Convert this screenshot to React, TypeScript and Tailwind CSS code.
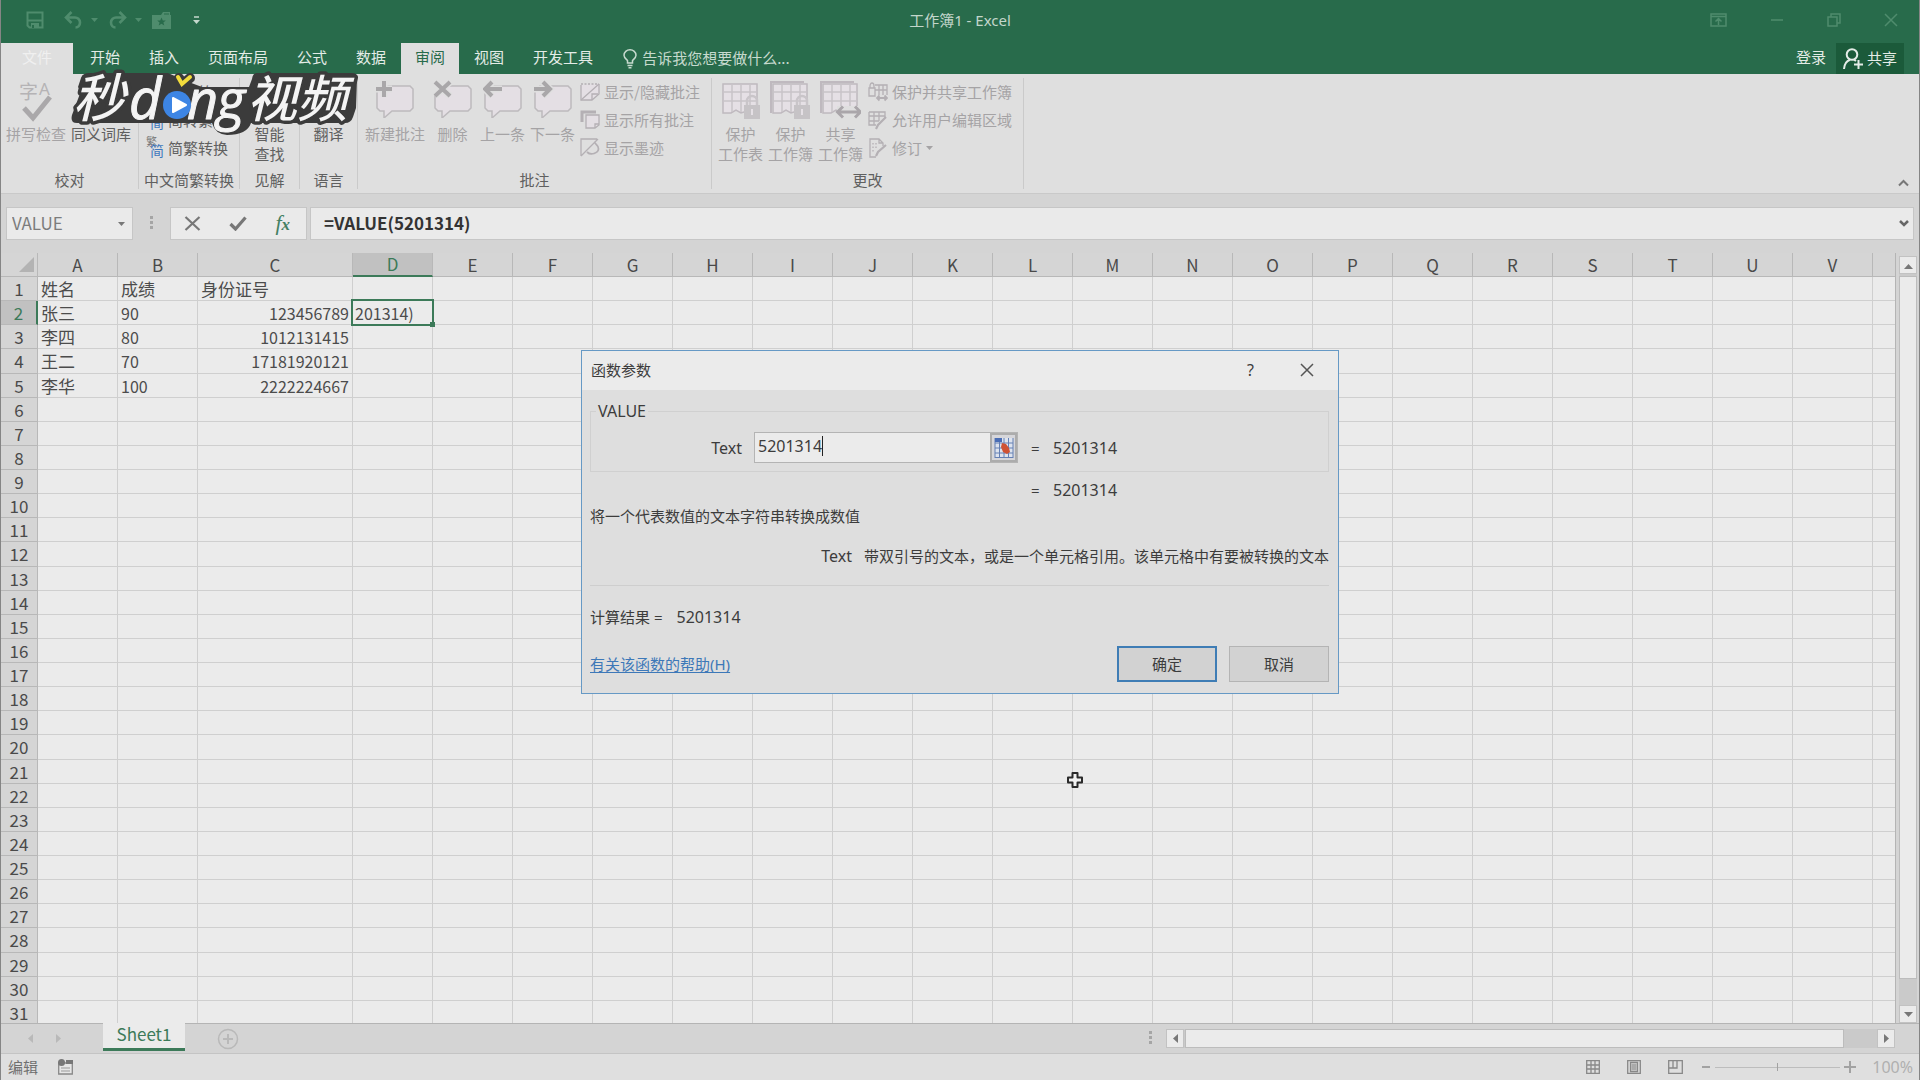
import clsx from "clsx";
import type { ReactNode } from "react";

const COLUMNS = "ABCDEFGHIJKLMNOPQRSTUV".split("");
const ROWS = Array.from({ length: 31 }, (_, i) => i + 1);

const CELLS: Record<string, string> = {
  A1: "姓名",
  B1: "成绩",
  C1: "身份证号",
  A2: "张三",
  B2: "90",
  C2: "123456789",
  D2: "201314)",
  A3: "李四",
  B3: "80",
  C3: "1012131415",
  A4: "王二",
  B4: "70",
  C4: "17181920121",
  A5: "李华",
  B5: "100",
  C5: "2222224667",
};

const TABS = [
  "开始",
  "插入",
  "页面布局",
  "公式",
  "数据",
  "审阅",
  "视图",
  "开发工具",
];

/* ---------- icons ---------- */

function SaveIcon() {
  return (
    <svg width="18" height="18" viewBox="0 0 18 18" fill="none" stroke="currentColor" strokeWidth="2">
      <path d="M1.5 1.5h15v15H3.500l-2-2z" />
      <path d="M2 9.500h14" />
      <path d="M5 12h8v5H5z" fill="currentColor" stroke="none" />
      <path d="M7 14v3" stroke="#286b4b" />
    </svg>
  );
}

function UndoIcon({ flip }: { flip?: boolean }) {
  return (
    <svg
      width="19"
      height="18"
      viewBox="0 0 19 18"
      fill="none"
      stroke="currentColor"
      strokeWidth="2.600"
      className={clsx(flip && "-scale-x-100")}
    >
      <path d="M7.500 1 2 6.500l5.500 5.500M2.500 6.500h8a5 5 0 0 1 5.500 5c0 3-2 5-4.500 5" />
    </svg>
  );
}

function CaretIcon({ className }: { className?: string }) {
  return (
    <svg width="7" height="4" viewBox="0 0 7 4" className={className}>
      <path d="M0 0h7L3.500 4z" fill="currentColor" />
    </svg>
  );
}

function FolderStarIcon() {
  return (
    <svg width="19" height="17" viewBox="0 0 19 17">
      <path d="M0 3h9l2-3h7v3h1v14H0z" fill="currentColor" />
      <path d="M12 2h5" stroke="#286b4b" />
      <path d="m9.500 5.500 1.300 3h3l-2.400 2 .9 3-2.800-1.800-2.800 1.800.9-3-2.400-2h3z" fill="#286b4b" />
    </svg>
  );
}

function BulbIcon() {
  return (
    <svg width="14" height="20" viewBox="0 0 14 20" fill="none" stroke="currentColor" strokeWidth="1.500">
      <path d="M4.500 14v-2.500C3 10 1 8.800 1 6.300a6 5.500 0 0 1 12 0c0 2.500-2 3.700-3.500 5.200V14z" />
      <path d="M4.500 16.500h5M5.500 18.800h3" />
    </svg>
  );
}

function PersonIcon() {
  return (
    <svg width="20" height="22" viewBox="0 0 20 22" fill="none" stroke="currentColor" strokeWidth="2">
      <circle cx="9" cy="6.500" r="5.300" />
      <path d="M1 21c.3-5 2.500-8 6-9.300M11 11.700l2 1.300M15.500 12v9M11 16.500h9" />
    </svg>
  );
}

function SpellIcon() {
  return (
    <svg width="38" height="42" viewBox="0 0 38 42" fill="#b5b3b5" className="overflow-visible">
      <text x="2" y="19" fontSize="19" className="font-[Noto_Sans_CJK_SC,sans-serif]">字</text>
      <text x="22" y="15" fontSize="17" className="font-[Noto_Sans,sans-serif]">A</text>
      <path d="m7 28 9 10L33 17" fill="none" stroke="#aaa8aa" strokeWidth="5" />
    </svg>
  );
}

function ConvertIcon() {
  return (
    <svg width="18" height="24" viewBox="0 0 18 24" className="overflow-visible font-[Noto_Sans_CJK_SC,sans-serif]">
      <text x="0" y="10" fontSize="11" fill="#777">繁</text>
      <text x="4" y="20" fontSize="14" fill="#3f78bd">简</text>
    </svg>
  );
}

type CommentKind = "new" | "delete" | "previous" | "next";

const COMMENT_MARKS: Record<CommentKind, string> = {
  new: "M9 1v16M1 9h16",
  delete: "M2 2l15 14M17 2 2 16",
  previous: "M19 9H3M9 2 2 9l7 7",
  next: "M1 9h16M10 2l7 7-7 7",
};

function CommentIcon({ kind }: { kind: CommentKind }) {
  return (
    <svg width="40" height="38" viewBox="0 0 40 38" fill="none">
      <path
        d="M6 6h29l3 3v19l-3 3H17l-8 7v-7H5l-3-3V12"
        fill="#e4dfe4"
        stroke="#bdbabd"
        strokeWidth="1.500"
      />
      <path d={COMMENT_MARKS[kind]} stroke="#dfdfdf" strokeWidth="7" />
      <path d={COMMENT_MARKS[kind]} stroke="#a9a7a9" strokeWidth="4" />
    </svg>
  );
}

function SheetIcon({ mark, stacked }: { mark: "lock" | "arrow"; stacked?: boolean }) {
  return (
    <svg width="42" height="40" viewBox="0 0 42 40" fill="none" stroke="#bfb9bf" strokeWidth="1.500">
      {stacked && <path d="M2 33V2h33" strokeWidth="2" />}
      <path d="M4 4h34v26l-5 3-5-2-6 2-5-3-5 3H4z" fill="#e5e0e5" />
      <path d="M13 4v28M22 4v28M31 4v28M4 12h34M4 21h34" stroke="#c8c3c8" />
      {mark === "lock" ? (
        <>
          <path d="M28 25v-4a5 5 0 0 1 10 0v4" stroke="#c9c5c9" strokeWidth="2.500" />
          <path d="M25 25h16v14H25z" fill="#c6c3c6" stroke="none" />
          <path d="M33 29v6" stroke="#e5e0e5" strokeWidth="2" />
        </>
      ) : (
        <>
          <path d="M18 26h24v12H18z" fill="#dfdfdf" stroke="none" />
          <path d="M19 32h22M24 26.500 18.500 32l5.500 5.500M36 26.500l5.500 5.500-5.500 5.500" stroke="#aaa6aa" strokeWidth="3" />
        </>
      )}
    </svg>
  );
}

function SmallIcon({ children }: { children: ReactNode }) {
  return (
    <svg width="20" height="20" viewBox="0 0 20 20" fill="none" stroke="#b4b0b4" strokeWidth="1.300" className="shrink-0">
      {children}
    </svg>
  );
}

const toggleNoteIcon = (
  <SmallIcon>
    <path d="M1 3v15h11l7-6V2" fill="#e4dfe4" />
    <path d="M1 2h18" strokeDasharray="2 1.500" />
    <path d="M1 18 19 2M12 18v-6h6" />
  </SmallIcon>
);

const allNotesIcon = (
  <SmallIcon>
    <path d="M2 12V2h14" strokeWidth="3" />
    <path d="M6 5h13v10l-4 3H6z" fill="#e4dfe4" />
    <path d="M15 18v-4h4" />
  </SmallIcon>
);

const inkIcon = (
  <SmallIcon>
    <path d="M1 18V1h16M1 18 18 1" />
    <path d="M7 14c4 4 11 1 11.500-3S14 6 15 4" strokeWidth="1.800" />
  </SmallIcon>
);

const shareProtectIcon = (
  <SmallIcon>
    <path d="M7 3h12v10M11 3v10M15 3v10M7 8h12" />
    <path d="M1 6h6v8H1zM2 6V4a2 3 0 0 1 4 0v2" />
    <path d="M9 16h10M11.500 13.500 9 16l2.500 2.500M16.500 13.500 19 16l-2.500 2.500" strokeWidth="1.800" />
  </SmallIcon>
);

const editRangeIcon = (
  <SmallIcon>
    <path d="M1 2h16v6M1 2v13h7M6 2v13M11 2v9M1 6h16M1 11h10" />
    <path d="m8 19 2-4 8-8" strokeWidth="2.200" />
  </SmallIcon>
);

const trackIcon = (
  <SmallIcon>
    <path d="M8 19H2V1h9l4 4v3M11 1v4h4" />
    <path d="m8 18 2-4 8-7" strokeWidth="2.200" />
    <path d="M5 5v10M8 5v7" strokeDasharray="1.500 2" />
  </SmallIcon>
);

function Triangle({ dir }: { dir: "up" | "down" | "left" | "right" }) {
  const paths = {
    up: "M0 8h9L4.500 3z",
    down: "M0 2h9L4.500 7z",
    left: "M7 0v9L2 4.500z",
    right: "M2 0v9l5-4.500z",
  };
  return (
    <svg width="9" height="9" viewBox="0 0 9 9">
      <path d={paths[dir]} fill="currentColor" />
    </svg>
  );
}

function WatermarkLogo() {
  return (
    <svg
      width="300"
      height="80"
      viewBox="0 0 300 80"
      className="pointer-events-none absolute top-16 left-16 z-10 overflow-visible font-[Noto_Sans_CJK_SC,sans-serif] italic"
      role="img"
      aria-label="秒dong视频"
    >
      <path
        d="M24 9q-6 0-8 5l-3 9 3 4-9 24q-2 8 5 8h135q3 11 15 12 20 0 24-12h94q6 0 8-6l3-9 1-29q1-6-5-6H192q-4 0-5 6l-3 8h-47l-16-6-18-8z"
        fill="#3b3b3b"
      />
      <g fill="#f4f4f4" stroke="#3b3b3b" strokeWidth="7" strokeLinejoin="round" paintOrder="stroke" fontWeight="500">
        <text x="8" y="53" fontSize="52">秒</text>
        <text x="182" y="53" fontSize="50">视频</text>
      </g>
      <g
        fill="#f4f4f4"
        stroke="#f4f4f4"
        strokeWidth="1"
        strokeLinejoin="round"
        fontWeight="500"
        className="font-[Open_Sans,Noto_Sans,sans-serif]"
      >
        <text x="64" y="55" fontSize="56">d</text>
        <text x="122" y="55" fontSize="54">n</text>
        <text x="152" y="55" fontSize="54">g</text>
      </g>
      <circle cx="112" cy="41" r="14" fill="#3d85e4" />
      <path d="m108 34 13 7-13 7z" fill="#fff" stroke="#fff" strokeWidth="2" strokeLinejoin="round" />
      <path d="m114 14 4 6 7-6" fill="none" stroke="#3b3b3b" strokeWidth="10" strokeLinecap="round" />
      <path d="m113 13 4 7 8-7" fill="none" stroke="#f3dc3c" strokeWidth="4" strokeLinecap="round" />
    </svg>
  );
}

/* ---------- title bar and tabs ---------- */

function TitleBar() {
  return (
    <header className="grid h-[43px] grid-cols-[1fr_auto_1fr] items-center pb-[3px] text-[#4f8c6d]">
      <div className="flex items-center pl-[25px]">
        <button aria-label="保存"><SaveIcon /></button>
        <button aria-label="撤消" className="ml-5 flex items-center gap-2"><UndoIcon /><CaretIcon /></button>
        <button aria-label="恢复" className="ml-[10px] flex items-center gap-2"><UndoIcon flip /><CaretIcon /></button>
        <button aria-label="打开" className="ml-[10px]"><FolderStarIcon /></button>
        <button aria-label="自定义快速访问工具栏" className="ml-[22px] text-[#c5d8cd]">
          <svg width="7" height="8" viewBox="0 0 7 8">
            <path d="M1 1h5" stroke="currentColor" strokeWidth="1.500" />
            <path d="M0 4h7L3.500 8z" fill="currentColor" />
          </svg>
        </button>
      </div>
      <h1 className="font-[Noto_Sans,Noto_Sans_CJK_SC,sans-serif] text-[15px] text-[#c3d6cb]">工作簿1 - Excel</h1>
      <div className="flex items-center justify-end gap-[43px] pr-[21px]">
        <button aria-label="功能区显示选项">
          <svg width="17" height="14" viewBox="0 0 17 14" fill="none" stroke="currentColor" strokeWidth="1.500">
            <path d="M1 1h15v12H1zM1 3.500h15M8.500 12V6M5.500 8.500l3-3 3 3" />
          </svg>
        </button>
        <button aria-label="最小化">
          <svg width="14" height="14" viewBox="0 0 14 14"><path d="M1 7h12" stroke="currentColor" strokeWidth="1.500" /></svg>
        </button>
        <button aria-label="还原">
          <svg width="14" height="14" viewBox="0 0 14 14" fill="none" stroke="currentColor" strokeWidth="1.500">
            <path d="M1 4h9v9H1zM4 4V1h9v9h-3" />
          </svg>
        </button>
        <button aria-label="关闭">
          <svg width="14" height="14" viewBox="0 0 14 14"><path d="m1 1 12 12M13 1 1 13" stroke="currentColor" strokeWidth="1.500" /></svg>
        </button>
      </div>
    </header>
  );
}

function TabBar() {
  return (
    <nav className="flex h-[31px] items-stretch text-[15px] text-[#e4ece7]">
      <button className="mr-[3px] w-[72px] bg-[#dfdfdf] pb-[2px] text-[#f0f0f0]">文件</button>
      <div className="flex gap-px">
        {TABS.map((tab) => (
          <button
            key={tab}
            className={clsx("px-[14px] pb-[2px]", tab === "审阅" && "bg-[#dfdfdf] text-[#286b4b]")}
          >
            {tab}
          </button>
        ))}
      </div>
      <button className="ml-4 flex items-center gap-[5px] text-[#c6dace]">
        <BulbIcon />
        告诉我您想要做什么...
      </button>
      <button className="ml-auto px-[10px] pb-[2px]">登录</button>
      <button className="mr-[15px] flex items-center gap-1 bg-[#1b5a3a] px-[7px]">
        <PersonIcon />
        共享
      </button>
    </nav>
  );
}

/* ---------- ribbon ---------- */

function RibbonGroup({ label, className, children }: { label: string; className?: string; children: ReactNode }) {
  return (
    <section className="flex shrink-0">
      <div className="flex flex-col">
        <div className={clsx("flex flex-1 items-start pt-1", className)}>{children}</div>
        <h2 className="pb-[3px] text-center leading-5 text-[#606060]">{label}</h2>
      </div>
      <span className="my-1 w-px bg-[#cacaca]" />
    </section>
  );
}

interface BigButtonProps {
  icon?: ReactNode;
  lines: string[];
  wide?: boolean;
  enabled?: boolean;
}

function BigButton({ icon, lines, wide, enabled }: BigButtonProps) {
  return (
    <button
      className={clsx(
        "flex flex-col items-center leading-5",
        wide ? "w-[60px]" : "w-[45px]",
        enabled ? "text-[#606060]" : "text-[#a5a3a5]",
      )}
    >
      <span className="flex h-[46px] items-start justify-center pt-[2px]">{icon}</span>
      {lines.map((line) => (
        <span key={line} className="whitespace-nowrap">{line}</span>
      ))}
    </button>
  );
}

interface SmallButtonProps {
  icon: ReactNode;
  label: string;
  enabled?: boolean;
  caret?: boolean;
}

function SmallButton({ icon, label, enabled, caret }: SmallButtonProps) {
  return (
    <button
      className={clsx(
        "flex h-7 items-center gap-1 whitespace-nowrap",
        enabled ? "text-[#606060]" : "text-[#a5a3a5]",
      )}
    >
      {icon}
      {label}
      {caret && <CaretIcon />}
    </button>
  );
}

function Ribbon() {
  return (
    <div className="flex h-[120px] border-b border-[#c9c9c9] bg-[#dfdfdf] text-[15px]">
      <RibbonGroup label="校对" className="gap-[5px] pr-[7px] pl-[5px]">
        <BigButton wide icon={<SpellIcon />} lines={["拼写检查"]} />
        <BigButton wide enabled lines={["同义词库"]} />
      </RibbonGroup>
      <RibbonGroup label="中文简繁转换" className="pr-[11px] pl-[7px]">
        <div>
          <SmallButton enabled icon={<ConvertIcon />} label="繁转简" />
          <SmallButton enabled icon={<ConvertIcon />} label="简转繁" />
          <SmallButton enabled icon={<ConvertIcon />} label="简繁转换" />
        </div>
      </RibbonGroup>
      <RibbonGroup label="见解" className="px-[7px]">
        <BigButton enabled lines={["智能", "查找"]} />
      </RibbonGroup>
      <RibbonGroup label="语言" className="px-[6px]">
        <BigButton enabled lines={["翻译"]} />
      </RibbonGroup>
      <RibbonGroup label="批注" className="gap-[5px] pr-[11px] pl-[7px]">
        <BigButton wide icon={<CommentIcon kind="new" />} lines={["新建批注"]} />
        <BigButton icon={<CommentIcon kind="delete" />} lines={["删除"]} />
        <BigButton icon={<CommentIcon kind="previous" />} lines={["上一条"]} />
        <BigButton icon={<CommentIcon kind="next" />} lines={["下一条"]} />
        <div>
          <SmallButton icon={toggleNoteIcon} label="显示/隐藏批注" />
          <SmallButton icon={allNotesIcon} label="显示所有批注" />
          <SmallButton icon={inkIcon} label="显示墨迹" />
        </div>
      </RibbonGroup>
      <RibbonGroup label="更改" className="gap-[5px] pr-[11px] pl-[6px]">
        <BigButton icon={<SheetIcon mark="lock" />} lines={["保护", "工作表"]} />
        <BigButton icon={<SheetIcon mark="lock" stacked />} lines={["保护", "工作簿"]} />
        <BigButton icon={<SheetIcon mark="arrow" stacked />} lines={["共享", "工作簿"]} />
        <div>
          <SmallButton icon={shareProtectIcon} label="保护并共享工作簿" />
          <SmallButton icon={editRangeIcon} label="允许用户编辑区域" />
          <SmallButton caret icon={trackIcon} label="修订" />
        </div>
      </RibbonGroup>
      <button aria-label="折叠功能区" className="mr-[10px] mb-[6px] ml-auto self-end">
        <svg width="11" height="8" viewBox="0 0 11 8" fill="none" stroke="#777" strokeWidth="2">
          <path d="m1 6.500 4.500-4.500L10 6.500" />
        </svg>
      </button>
    </div>
  );
}

function FormulaBar() {
  return (
    <div className="flex bg-[#d4d4d4] px-[5px] py-[13px]">
      <div className="flex h-[33px] w-[127px] items-center border border-[#c6c6c6] bg-[#eaeaea] pr-[7px]">
        <input
          aria-label="名称框"
          defaultValue="VALUE"
          className="min-w-0 flex-1 pb-[2px] pl-[5px] text-[17px] text-[#7c7c7c] outline-none"
        />
        <CaretIcon className="text-[#777]" />
      </div>
      <svg width="37" height="33" viewBox="0 0 37 33" fill="#a5a5a5">
        <path d="M17 9h3v3h-3zM17 14h3v3h-3zM17 19h3v3h-3z" />
      </svg>
      <div className="flex w-[137px] items-center justify-between border border-[#c6c6c6] bg-[#eaeaea] pr-4 pl-[13px]">
        <button aria-label="取消编辑">
          <svg width="17" height="15" viewBox="0 0 17 15"><path d="m1.500 1 14 13M15.500 1l-14 13" stroke="#777" strokeWidth="2.200" /></svg>
        </button>
        <button aria-label="输入">
          <svg width="18" height="15" viewBox="0 0 18 15" fill="none"><path d="m1.500 8 5 5L16.500 1.500" stroke="#777" strokeWidth="3.200" /></svg>
        </button>
        <button aria-label="插入函数" className="font-[Liberation_Serif,serif] text-[22px] leading-6 text-[#448063] italic">
          f<span className="text-[17px] font-bold">x</span>
        </button>
      </div>
      <div className="ml-[3px] flex flex-1 items-center border border-[#c6c6c6] bg-[#eaeaea] pr-1">
        <input
          aria-label="编辑栏"
          defaultValue="=VALUE(5201314)"
          className="min-w-0 flex-1 pb-[2px] pl-[13px] text-[17px] font-bold text-[#333] outline-none"
        />
        <svg width="10" height="8" viewBox="0 0 10 8" fill="none" stroke="#666" strokeWidth="2.500">
          <path d="m1 1 4 4 4-4" />
        </svg>
      </div>
    </div>
  );
}

/* ---------- grid ---------- */

function Cell({ id }: { id: string }) {
  const value = CELLS[id];
  const active = id === "D2";
  const isText = id.startsWith("A") || id.endsWith("1");

  return (
    <td
      className={clsx(
        "border-r border-b border-[#cfcfcf] p-0 pt-px leading-[22px] whitespace-nowrap text-[#4c4c4c]",
        isText ? "text-[17px]" : "text-base",
        id.startsWith("C") && !isText ? "pr-[3px] text-right" : active ? "pl-[2px]" : "pl-[3px]",
        active && "relative",
      )}
    >
      {value}
      {active && (
        <span className="absolute -inset-[2px] border-2 border-[#3c7a59]">
          <span className="absolute -right-[3px] -bottom-[3px] size-[5px] bg-[#3c7a59]" />
        </span>
      )}
    </td>
  );
}

function Grid() {
  return (
    <table className="h-[calc(100%+2px)] w-full table-fixed border-separate border-spacing-0 bg-[#ebebeb] font-[Noto_Sans_CJK_SC,sans-serif]">
      <colgroup>
        <col className="w-[37px]" />
        {COLUMNS.map((c) => (
          <col key={c} className={c === "C" ? "w-[155px]" : "w-20"} />
        ))}
        <col />
      </colgroup>
      <thead>
        <tr className="h-6 bg-[#d5d5d5] text-[17px] text-[#4a4a4a]">
          <th aria-label="全选" className="border-r border-b border-[#b8b8b8] p-0">
            <svg width="15" height="15" viewBox="0 0 15 15" className="mr-[3px] ml-auto">
              <path d="M15 0v15H0z" fill="#b3b3b3" />
            </svg>
          </th>
          {COLUMNS.map((c) => (
            <th
              key={c}
              className={clsx(
                "border-r p-0 leading-5 font-normal",
                c === "D"
                  ? "border-b-2 border-r-[#b8b8b8] border-b-[#3c7a59] bg-[#c1c1c1] text-[#3c7a59]"
                  : "border-b border-[#b8b8b8]",
              )}
            >
              {c}
            </th>
          ))}
          <th className="border-b border-[#b8b8b8] p-0" />
        </tr>
      </thead>
      <tbody>
        {ROWS.map((r) => (
          <tr key={r} className="h-6">
            <th
              className={clsx(
                "border-r border-b p-0 pt-px text-[17px] leading-[22px] font-normal",
                r === 2
                  ? "border-r-2 border-r-[#3c7a59] border-b-[#b8b8b8] bg-[#c1c1c1] text-[#3c7a59]"
                  : "border-[#b8b8b8] bg-[#d5d5d5] text-[#4a4a4a]",
              )}
            >
              {r}
            </th>
            {COLUMNS.map((c) => (
              <Cell key={c} id={c + r} />
            ))}
            <td className="border-b border-[#cfcfcf] p-0" />
          </tr>
        ))}
      </tbody>
    </table>
  );
}

function VerticalScrollbar() {
  return (
    <div className="flex w-[18px] flex-col bg-[#cacaca] text-[#777]">
      <button aria-label="向上滚动" className="flex h-[18px] items-center justify-center border border-[#c2c2c2] bg-[#ebebeb]"><Triangle dir="up" /></button>
      <div className="mt-[2px] flex-1 border border-[#bcbcbc] bg-[#ebebeb]" />
      <button aria-label="向下滚动" className="mt-[26px] flex h-[18px] items-center justify-center border border-[#c2c2c2] bg-[#ebebeb]"><Triangle dir="down" /></button>
    </div>
  );
}

function SheetBar() {
  return (
    <div className="flex h-[31px] shrink-0 items-start border-t border-b border-t-[#b4b4b4] border-b-[#c4c4c4] bg-[#d4d4d4]">
      <div className="flex h-full w-[102px] items-center gap-[19px] pl-[25px] text-[#b9b9b9]">
        <button aria-label="上一张工作表"><Triangle dir="left" /></button>
        <button aria-label="下一张工作表"><Triangle dir="right" /></button>
      </div>
      <button className="-mt-px h-[28px] w-[82px] border-b-[3px] border-[#3c7a59] bg-[#ebebeb] pb-[3px] text-[17px] leading-5 text-[#3c7a59]">
        Sheet1
      </button>
      <button aria-label="新工作表" className="ml-8 self-center">
        <svg width="22" height="22" viewBox="0 0 22 22" fill="none" stroke="#b9b9b9">
          <circle cx="11" cy="11" r="9.500" strokeWidth="1.500" />
          <path d="M11 6v10M6 11h10" strokeWidth="2" />
        </svg>
      </button>
      <svg width="18" height="29" viewBox="0 0 18 29" fill="#a5a5a5" className="ml-auto">
        <path d="M1 7h3v3H1zM1 12h3v3H1zM1 17h3v3H1z" />
      </svg>
      <div className="mt-[5px] mr-6 flex h-[19px] w-[38%] bg-[#cacaca] text-[#777]">
        <button aria-label="向左滚动" className="flex w-[18px] items-center justify-center border border-[#c2c2c2] bg-[#ebebeb]"><Triangle dir="left" /></button>
        <div className="ml-px flex-1 border border-[#bcbcbc] bg-[#ebebeb]" />
        <button aria-label="向右滚动" className="ml-[33px] flex w-[18px] items-center justify-center border border-[#c2c2c2] bg-[#ebebeb]"><Triangle dir="right" /></button>
      </div>
    </div>
  );
}

function StatusBar() {
  return (
    <footer className="flex h-[26px] shrink-0 items-center bg-[#dfdfdf] pr-[6px] pl-[7px] text-[15px] text-[#707070]">
      <span>编辑</span>
      <button aria-label="录制宏" className="ml-5">
        <svg width="15" height="16" viewBox="0 0 15 16">
          <path d="M.7 4h13.600v11H.7z" fill="#e6e6e6" stroke="#888" strokeWidth="1.300" />
          <path d="M8 1h7v4H8z" fill="#777" />
          <circle cx="3.500" cy="3.500" r="3.500" fill="#777" />
          <path d="M3 9h9M3 12h9" stroke="#999" />
        </svg>
      </button>
      <div className="ml-auto flex items-center gap-[27px] text-[#888]">
        <button aria-label="普通">
          <svg width="14" height="14" viewBox="0 0 14 14" fill="none" stroke="currentColor" strokeWidth="1.300"><path d="M.7.7h12.600v12.600H.7zM5 1v12M9 1v12M1 5h12M1 9h12" /></svg>
        </button>
        <button aria-label="页面布局">
          <svg width="14" height="14" viewBox="0 0 14 14" fill="none" stroke="currentColor" strokeWidth="1.300"><path d="M.7.7h12.600v12.600H.7zM3.500 2.500h7v9h-7z" /><path d="M5 4.500h4v5H5z" fill="#aaa" stroke="#aaa" /></svg>
        </button>
        <button aria-label="分页预览">
          <svg width="15" height="14" viewBox="0 0 15 14" fill="none" stroke="currentColor" strokeWidth="1.300"><path d="M.7.7h13.600v12.600H.7zM1 8h8V1M5 1v7" /></svg>
        </button>
      </div>
      <div className="ml-[18px] flex items-center gap-1 text-[#a2a2a2]">
        <button aria-label="缩小">
          <svg width="10" height="12" viewBox="0 0 10 12"><path d="M1 6h8" stroke="currentColor" strokeWidth="2" /></svg>
        </button>
        <input
          type="range"
          aria-label="显示比例"
          defaultValue="50"
          className="h-2 w-[125px] appearance-none bg-[linear-gradient(#bdbdbd,#bdbdbd)] bg-[length:100%_1px] bg-center bg-no-repeat [&::-webkit-slider-thumb]:h-2 [&::-webkit-slider-thumb]:w-px [&::-webkit-slider-thumb]:appearance-none [&::-webkit-slider-thumb]:bg-[#a2a2a2]"
        />
        <button aria-label="放大">
          <svg width="12" height="12" viewBox="0 0 12 12"><path d="M0 6h12M6 0v12" stroke="currentColor" strokeWidth="2" /></svg>
        </button>
      </div>
      <span className="ml-4 font-[Noto_Sans,sans-serif] text-base text-[#b0b0b0]">100%</span>
    </footer>
  );
}

/* ---------- function arguments dialog ---------- */

function RangePickIcon() {
  return (
    <svg width="20" height="22" viewBox="0 0 20 22">
      <path d="M1 1h18v20H1z" fill="#dde3ee" />
      <path d="M1 6h18M1 11h18M1 16h18M1 20.500h18M1 1v20M5.500 1v20M10 1v20M14.500 1v20M19 1v20" stroke="#6580b4" fill="none" />
      <path d="M1 1h7v4H1z" fill="#4a6db5" />
      <path d="m8 6 4 1 3 4 1 4-3 2-4-2-2-5z" fill="#cf5234" />
    </svg>
  );
}

function FunctionDialog() {
  return (
    <div
      role="dialog"
      aria-label="函数参数"
      className="absolute inset-x-0 top-[350px] z-20 mx-auto w-[758px] border border-[#6699c5] bg-[#dedede] pb-[11px] font-[Noto_Sans,Noto_Sans_CJK_SC,sans-serif] text-[15px] leading-5 text-[#3c3c3c]"
    >
      <div className="flex h-[39px] items-center bg-[#ebebeb] pr-6 pb-[2px] pl-[9px]">
        <h2>函数参数</h2>
        <button aria-label="帮助" className="ml-auto text-base">?</button>
        <button aria-label="关闭对话框" className="ml-[46px]">
          <svg width="14" height="14" viewBox="0 0 14 14"><path d="m1 1 12 12M13 1 1 13" stroke="#555" strokeWidth="1.500" /></svg>
        </button>
      </div>
      <div className="pt-[11px] pr-[9px] pl-2">
        <fieldset className="h-[71px] border border-[#d0d0d0]">
          <legend className="ml-[5px] px-[2px] text-base leading-5">VALUE</legend>
          <div className="flex items-center pt-[11px]">
            <label htmlFor="arg-text" className="w-[151px] text-right text-base leading-5">Text</label>
            <div className="ml-3 flex h-[31px] w-[264px] border border-[#b4b4b4] bg-[#ebebeb]">
              <div className="flex flex-1 items-center pb-1 pl-[3px]">
                <input id="arg-text" defaultValue="5201314" className="field-sizing-content text-base leading-5 outline-none" />
                <span className="h-5 w-px bg-[#222]" />
              </div>
              <button aria-label="选择单元格区域" className="flex w-[27px] items-center justify-center border-2 border-[#acacac] bg-[#d6d6da]">
                <RangePickIcon />
              </button>
            </div>
            <span className="ml-[13px] w-[22px]">=</span>
            <output className="text-base leading-5">5201314</output>
          </div>
        </fieldset>
        <div className="mt-2 flex pl-[441px]">
          <span className="w-[22px]">=</span>
          <output className="text-base leading-5">5201314</output>
        </div>
        <p className="mt-[6px]">将一个代表数值的文本字符串转换成数值</p>
        <p className="mt-5 flex justify-end gap-3 whitespace-nowrap">
          <span className="text-base leading-5">Text</span>
          <span>带双引号的文本，或是一个单元格引用。该单元格中有要被转换的文本</span>
        </p>
        <hr className="mt-[19px] border-[#cecece]" />
        <p className="mt-[21px] flex">
          计算结果 =<output className="ml-[14px] text-base leading-5">5201314</output>
        </p>
        <div className="mt-[19px] flex items-center">
          <a href="#help" className="text-[#3d78b8] underline underline-offset-2">有关该函数的帮助(H)</a>
          <button className="ml-auto h-9 w-[100px] border-2 border-[#3f7db5] bg-[#d2d2d2]">确定</button>
          <button className="ml-3 h-9 w-[100px] border border-[#b4b4b4] bg-[#d2d2d2]">取消</button>
        </div>
      </div>
    </div>
  );
}

function CellCursor() {
  return (
    <svg width="18" height="18" viewBox="0 0 18 18" className="pointer-events-none absolute top-[771px] left-[1065px]">
      <path
        d="M6.500 2h5v4.500H16v5h-4.500V16h-5v-4.500H2v-5h4.500z"
        fill="#f2f2f2"
        stroke="#2a2a2a"
        strokeWidth="2"
        strokeLinejoin="round"
      />
    </svg>
  );
}

export default function App() {
  return (
    <div className="relative flex h-screen flex-col overflow-hidden border-x border-[#858585] bg-[#286b4b] font-[Noto_Sans_CJK_SC,sans-serif]">
      <TitleBar />
      <TabBar />
      <Ribbon />
      <FormulaBar />
      <main className="flex min-h-0 flex-1 bg-[#d4d4d4] pr-[2px]">
        <div className="mr-[3px] min-w-0 flex-1 overflow-hidden border-r border-[#b4b4b4]">
          <Grid />
        </div>
        <div className="flex pt-[3px]">
          <VerticalScrollbar />
        </div>
      </main>
      <SheetBar />
      <StatusBar />
      <WatermarkLogo />
      <FunctionDialog />
      <CellCursor />
    </div>
  );
}
